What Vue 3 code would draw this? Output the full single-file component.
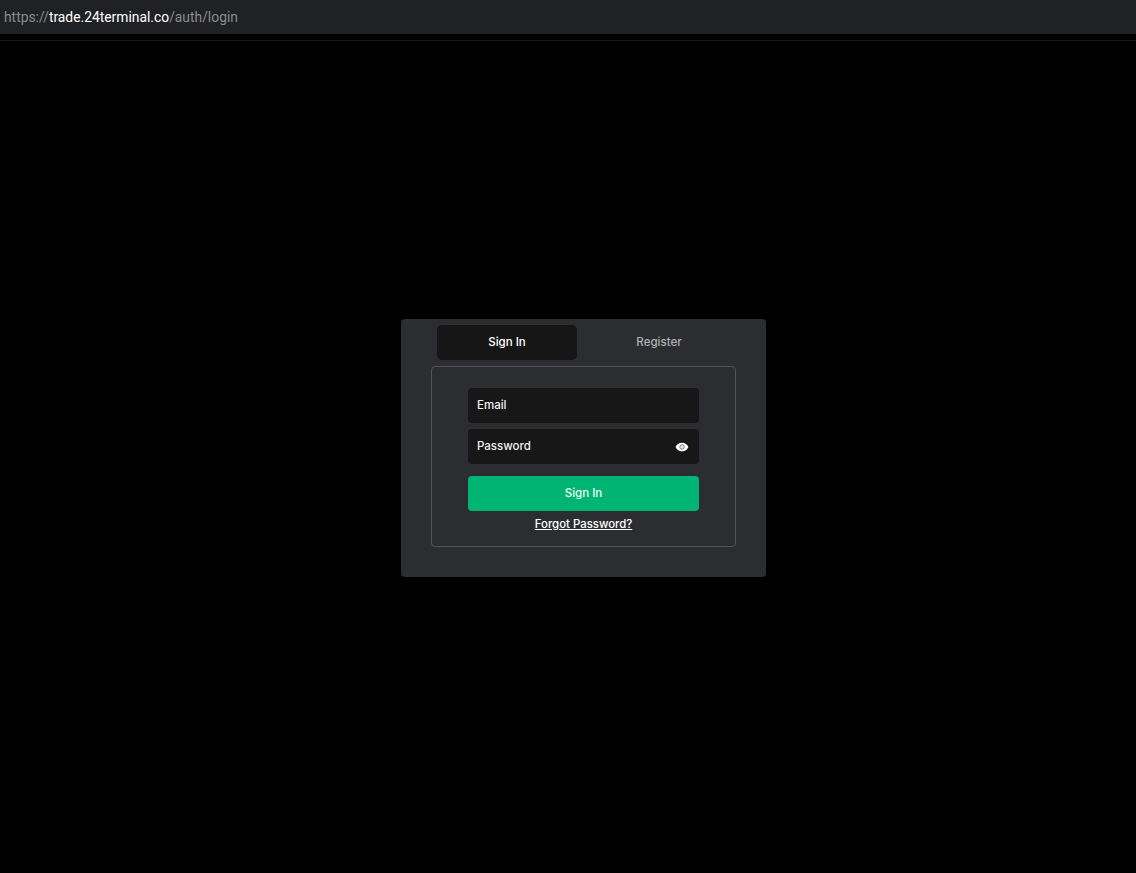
<template>
  <div class="page">
    <div class="address-bar">
      <span class="dim">https://</span><span class="host">trade.24terminal.co</span><span class="dim">/auth/login</span>
    </div>
    <div class="top-line"></div>

    <main class="main">
      <div class="card">
        <div class="tabs">
          <button
            v-for="tab in tabs"
            :key="tab"
            class="tab"
            :class="{ active: currentTab === tab }"
            @click="currentTab = tab"
          >
            {{ tab }}
          </button>
        </div>

        <form class="form-box" @submit.prevent>
          <input class="field" type="text" placeholder="Email" />
          <div class="password-wrap">
            <input class="field" :type="showPassword ? 'text' : 'password'" placeholder="Password" />
            <button type="button" class="eye" @click="showPassword = !showPassword">
              <svg width="14" height="14" viewBox="0 0 24 24">
                <path fill="#fff" d="M12 4.500C7 4.500 2.700 7.600 1 12c1.700 4.400 6 7.500 11 7.500s9.300-3.100 11-7.500c-1.700-4.400-6-7.500-11-7.500z" />
                <circle cx="12" cy="12" r="3.800" fill="#e8e8e8" stroke="#77797d" stroke-width="1.600" />
              </svg>
            </button>
          </div>
          <button class="submit" type="submit">Sign In</button>
          <a class="forgot" href="#">Forgot Password?</a>
        </form>
      </div>
    </main>
  </div>
</template>

<script setup>
import { ref } from 'vue';

const tabs = ['Sign In', 'Register'];
const currentTab = ref('Sign In');
const showPassword = ref(false);
</script>

<style>
html,
body {
  background: #000;
}
</style>

<style scoped>
.page {
  min-height: 873px;
  background: #000;
  font-family: "Inter", "Liberation Sans", sans-serif;
}

.address-bar {
  height: 34px;
  padding-left: 4px;
  box-sizing: border-box;
  background: #202124;
  font-family: "Roboto", "Liberation Sans", sans-serif;
  font-size: 13.85px;
  line-height: 34px;
}

.dim {
  color: #8a8c90;
}

.host {
  color: #fff;
}

.top-line {
  height: 1px;
  margin-top: 6px;
  background: #171717;
}

.main {
  display: flex;
  justify-content: center;
  padding: 278px 0 0 31px;
}

.card {
  width: 365px;
  height: 258px;
  box-sizing: border-box;
  padding: 6px 30px 0;
  background: #2c2d31;
  border-radius: 4px;
}

.tabs {
  display: flex;
  gap: 12px;
  padding-left: 6px;
}

.tab {
  width: 140px;
  height: 35px;
  padding: 0 0 2px;
  background: transparent;
  border: none;
  border-radius: 5px;
  color: #afb1b4;
  font-family: inherit;
  font-size: 11.5px;
  font-weight: 500;
  cursor: pointer;
}

.tab.active {
  background: #161616;
  color: #fff;
}

.form-box {
  display: flex;
  flex-direction: column;
  align-items: center;
  box-sizing: border-box;
  width: 305px;
  height: 181px;
  margin-top: 6px;
  padding-top: 21px;
  border: 1px solid #515257;
  border-radius: 4px;
}

.field {
  display: block;
  width: 231px;
  height: 35px;
  box-sizing: border-box;
  padding: 0 9px 2px;
  background: #171717;
  border: none;
  border-radius: 4px;
  outline: none;
  color: #fff;
  font-family: inherit;
  font-size: 11.5px;
  font-weight: 500;
}

.field::placeholder {
  color: #f2f2f2;
  opacity: 1;
}

.password-wrap {
  position: relative;
  margin-top: 6px;
}

.eye {
  position: absolute;
  top: 11px;
  right: 10px;
  display: flex;
  padding: 0;
  background: none;
  border: none;
  cursor: pointer;
}

.submit {
  width: 231px;
  height: 35px;
  margin-top: 12px;
  padding: 0 0 2px;
  background: #00b574;
  border: none;
  border-radius: 4px;
  color: #e6fff5;
  font-family: inherit;
  font-size: 11.5px;
  font-weight: 500;
  cursor: pointer;
}

.forgot {
  margin-top: 5px;
  color: #fff;
  font-size: 11.4px;
  font-weight: 500;
  line-height: 16px;
}
</style>
